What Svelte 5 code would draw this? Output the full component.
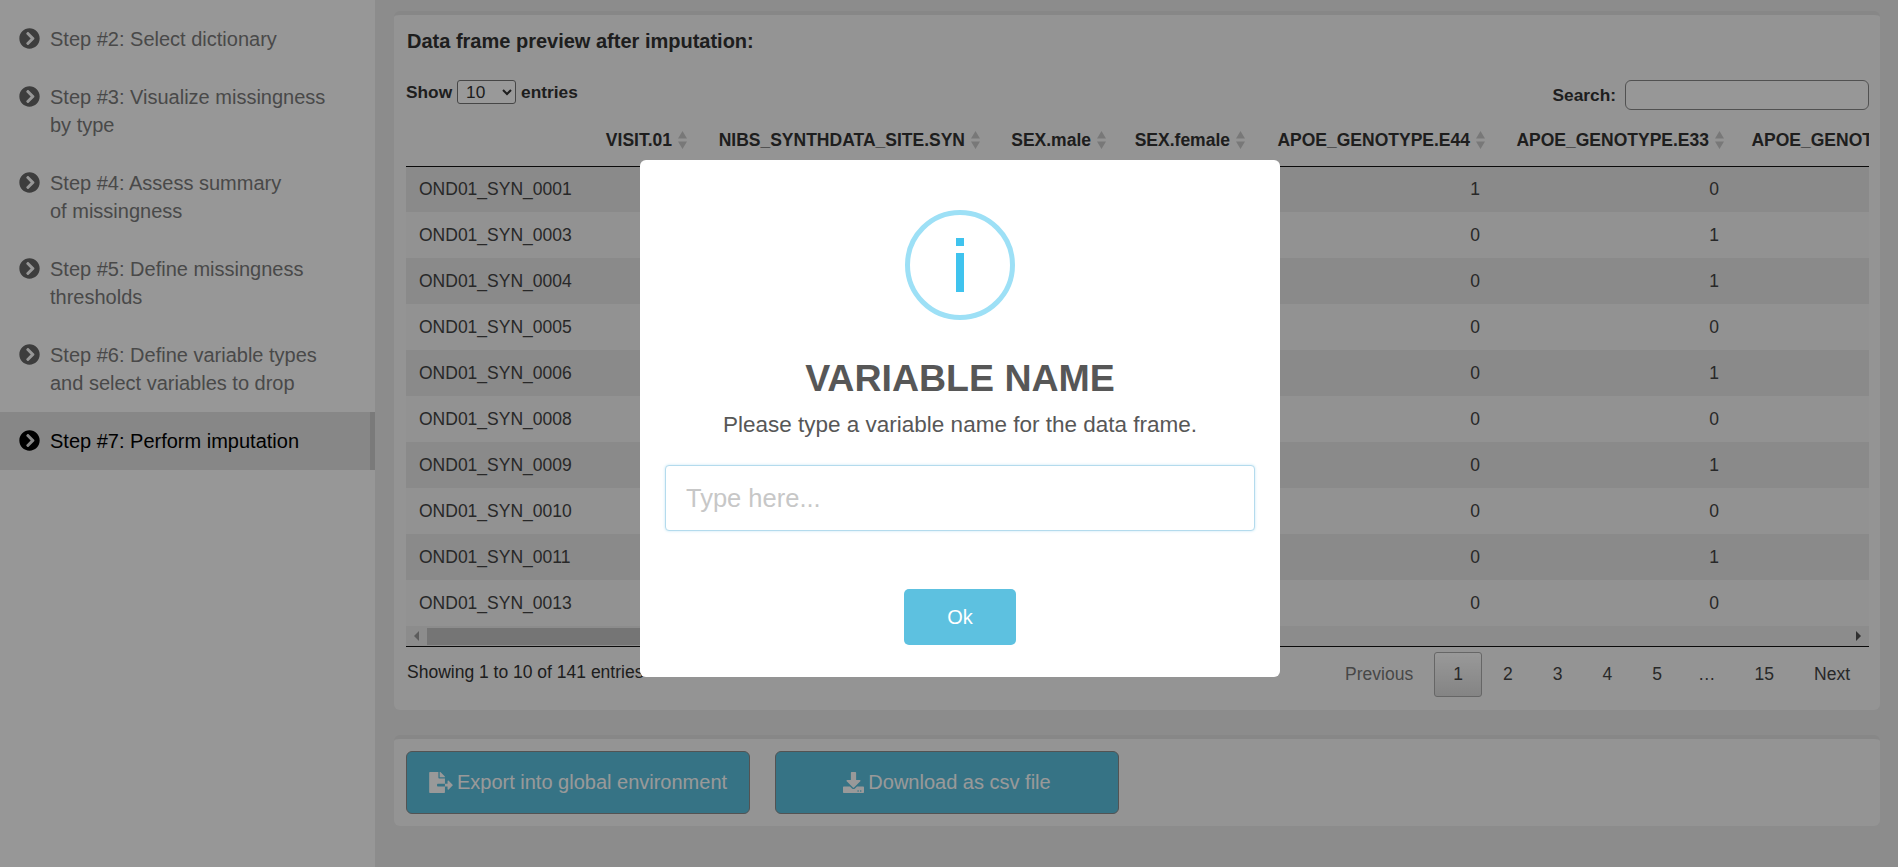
<script lang="ts">
	const steps = [
		'Step #2: Select dictionary',
		'Step #3: Visualize missingness\nby type',
		'Step #4: Assess summary\nof missingness',
		'Step #5: Define missingness\nthresholds',
		'Step #6: Define variable types\nand select variables to drop',
		'Step #7: Perform imputation'
	];

	const columns = [
		{ name: '', width: 180 },
		{ name: 'VISIT.01', width: 105 },
		{ name: 'NIBS_SYNTHDATA_SITE.SYN', width: 293 },
		{ name: 'SEX.male', width: 126 },
		{ name: 'SEX.female', width: 139 },
		{ name: 'APOE_GENOTYPE.E44', width: 240 },
		{ name: 'APOE_GENOTYPE.E33', width: 239 },
		{ name: 'APOE_GENOTYPE.E34', width: 235 }
	];

	const rows = [
		{ id: 'OND01_SYN_0001', e44: 1, e33: 0 },
		{ id: 'OND01_SYN_0003', e44: 0, e33: 1 },
		{ id: 'OND01_SYN_0004', e44: 0, e33: 1 },
		{ id: 'OND01_SYN_0005', e44: 0, e33: 0 },
		{ id: 'OND01_SYN_0006', e44: 0, e33: 1 },
		{ id: 'OND01_SYN_0008', e44: 0, e33: 0 },
		{ id: 'OND01_SYN_0009', e44: 0, e33: 1 },
		{ id: 'OND01_SYN_0010', e44: 0, e33: 0 },
		{ id: 'OND01_SYN_0011', e44: 0, e33: 1 },
		{ id: 'OND01_SYN_0013', e44: 0, e33: 0 }
	];

	const pages = ['2', '3', '4', '5', '…', '15'];
	const tableWidth = columns.reduce((sum, c) => sum + c.width, 0);
</script>

<div class="page">
	<aside class="sidebar">
		{#each steps as step, i}
			<div class="step" class:active={i === steps.length - 1}>
				<svg class="step-icon" viewBox="0 0 512 512" aria-hidden="true">
					<path
						fill="currentColor"
						d="M256 8c137 0 248 111 248 248S393 504 256 504 8 393 8 256 119 8 256 8zm113.9 231L234.4 103.5c-9.4-9.4-24.6-9.4-33.9 0l-17 17c-9.4 9.4-9.4 24.6 0 33.9L285.1 256 183.5 357.6c-9.4 9.4-9.4 24.6 0 33.9l17 17c9.4 9.4 24.6 9.4 33.9 0L369.9 273c9.4-9.4 9.4-24.6 0-34z"
					/>
				</svg>
				<span class="step-label">{step}</span>
			</div>
		{/each}
	</aside>

	<main class="content">
		<section class="box preview">
			<h2>Data frame preview after imputation:</h2>

			<div class="controls">
				<label class="length">
					Show
					<select>
						<option>10</option>
					</select>
					entries
				</label>
				<label class="search">
					Search:
					<input type="text" />
				</label>
			</div>

			<div class="table-wrap">
				<div class="table-clip">
					<table style="width: {tableWidth}px">
						<colgroup>
							{#each columns as col}
								<col style="width: {col.width}px" />
							{/each}
						</colgroup>
						<thead>
							<tr>
								{#each columns as col}
									<th>
										{#if col.name}
											<div class="th-inner">
												<span>{col.name}</span>
												<svg class="sort" viewBox="0 0 9 18" aria-hidden="true">
													<path d="M4.5 0 9 7.5H0z M4.5 18 0 10.5H9z" />
												</svg>
											</div>
										{/if}
									</th>
								{/each}
							</tr>
						</thead>
						<tbody>
							{#each rows as row}
								<tr>
									<td class="id">{row.id}</td>
									<td></td>
									<td></td>
									<td></td>
									<td></td>
									<td>{row.e44}</td>
									<td>{row.e33}</td>
									<td></td>
								</tr>
							{/each}
						</tbody>
					</table>
				</div>
				<div class="scrollbar">
					<span class="arrow left"></span>
					<span class="thumb"></span>
					<span class="arrow right"></span>
				</div>
			</div>

			<div class="table-footer">
				<div class="info">Showing 1 to 10 of 141 entries</div>
				<div class="pagination">
					<span class="page-link disabled">Previous</span>
					<span class="page-link current">1</span>
					{#each pages as p}
						<span class="page-link" class:ellipsis={p === '…'}>{p}</span>
					{/each}
					<span class="page-link">Next</span>
				</div>
			</div>
		</section>

		<section class="box actions">
			<button type="button" class="action-btn">
				<svg class="btn-icon export" viewBox="0 0 576 512" aria-hidden="true">
					<path
						fill="currentColor"
						d="M384 121.9c0-6.3-2.5-12.4-7-16.9L279.1 7c-4.5-4.5-10.6-7-17-7H256v128h128zM571 308l-95.7-96.4c-10.1-10.1-27.4-3-27.4 11.3V288h-64v64h64v65.2c0 14.3 17.3 21.4 27.4 11.3L571 332c6.6-6.6 6.6-17.4 0-24zm-379 28v-32c0-8.8 7.2-16 16-16h176V160H248c-13.2 0-24-10.8-24-24V0H24C10.7 0 0 10.7 0 24v464c0 13.3 10.7 24 24 24h336c13.3 0 24-10.7 24-24V352H208c-8.8 0-16-7.2-16-16z"
					/>
				</svg>
				Export into global environment
			</button>
			<button type="button" class="action-btn">
				<svg class="btn-icon" viewBox="0 0 512 512" aria-hidden="true">
					<path
						fill="currentColor"
						d="M216 0h80c13.3 0 24 10.7 24 24v168h87.7c17.8 0 26.7 21.5 14.1 34.1L269.7 378.3c-7.5 7.5-19.8 7.5-27.3 0L90.1 226.1c-12.6-12.6-3.7-34.1 14.1-34.1H192V24c0-13.3 10.7-24 24-24zm296 376v112c0 13.3-10.7 24-24 24H24c-13.3 0-24-10.7-24-24V376c0-13.3 10.7-24 24-24h146.7l49 49c20.1 20.1 52.5 20.1 72.6 0l49-49H488c13.3 0 24 10.7 24 24zm-124 88c0-11-9-20-20-20s-20 9-20 20 9 20 20 20 20-9 20-20zm64 0c0-11-9-20-20-20s-20 9-20 20 9 20 20 20 20-9 20-20z"
					/>
				</svg>
				Download as csv file
			</button>
		</section>
	</main>

	<div class="overlay">
		<div class="modal">
			<div class="info-icon">
				<span class="dot"></span>
				<span class="stem"></span>
			</div>
			<h1>VARIABLE NAME</h1>
			<p>Please type a variable name for the data frame.</p>
			<input class="name-input" type="text" placeholder="Type here..." />
			<button type="button" class="ok-btn">Ok</button>
		</div>
	</div>
</div>

<style>
	:global(body) {
		margin: 0;
		font-family: 'Liberation Sans', Arial, sans-serif;
		color: #333;
		background: #e9e9e9;
	}

	:global(*) {
		box-sizing: border-box;
	}

	.page {
		display: flex;
		height: 867px;
		overflow: hidden;
		background: #e9e9e9;
	}

	.sidebar {
		width: 375px;
		flex-shrink: 0;
		padding-top: 10px;
		background: #fcfcfc;
	}

	.step {
		display: flex;
		align-items: flex-start;
		gap: 10px;
		padding: 15px 5px 15px 19px;
		font-size: 20px;
		line-height: 28px;
		color: #7a7a7a;
	}

	.step.active {
		background: #e1e1e1;
		border-right: 5px solid #cccccc;
		color: #000;
	}

	.step-icon {
		width: 21px;
		height: 21px;
		margin-top: 3px;
		flex-shrink: 0;
		color: #666;
	}

	.step.active .step-icon {
		color: #000;
	}

	.step-label {
		white-space: pre-line;
	}

	.content {
		flex: 1;
		min-width: 0;
		padding: 11px 18px 0 19px;
	}

	.box {
		background: #f7f7f7;
		border-top: 4px solid #e1e1e1;
		border-radius: 6px;
		padding: 0 11px 0 12px;
	}

	.preview {
		height: 699px;
	}

	h2 {
		margin: 0;
		height: 52px;
		padding-left: 1px;
		line-height: 52px;
		font-size: 20px;
		font-weight: 700;
		color: #333;
	}

	.controls {
		display: flex;
		justify-content: space-between;
		align-items: flex-start;
		height: 30px;
		margin-top: 13px;
		font-size: 17.3px;
		font-weight: 700;
	}

	.length {
		display: flex;
		align-items: center;
		gap: 5px;
		height: 24px;
	}

	select {
		width: 59px;
		height: 24px;
		padding: 0 0 0 4px;
		border: 1px solid #767676;
		border-radius: 3px;
		background: #fff;
		font-family: inherit;
		font-size: 17.3px;
		color: #333;
	}

	.search {
		display: flex;
		align-items: center;
		gap: 9px;
		height: 30px;
	}

	.search input {
		width: 244px;
		height: 30px;
		border: 1px solid #888;
		border-radius: 6px;
		background: #fcfcfc;
	}

	.table-wrap {
		margin-top: 5px;
		width: 1463px;
		border-bottom: 1px solid #111;
	}

	.table-clip {
		overflow: hidden;
	}

	table {
		table-layout: fixed;
		border-collapse: collapse;
		font-size: 17.5px;
	}

	th {
		height: 51px;
		padding: 0 4px 0 10px;
		border-bottom: 1px solid #111;
		font-size: 17.5px;
		font-weight: 700;
		color: #333;
		white-space: nowrap;
	}

	.th-inner {
		display: flex;
		justify-content: flex-end;
		align-items: center;
		gap: 6px;
	}

	.sort {
		width: 9px;
		height: 18px;
		flex-shrink: 0;
		fill: #c8c8c8;
	}

	td {
		height: 46px;
		padding: 0 9px 0 13px;
		color: #444;
		text-align: right;
		overflow: hidden;
	}

	td.id {
		text-align: left;
	}

	tbody tr:nth-child(odd) {
		background: #e6e6e6;
	}

	tbody tr:nth-child(even) {
		background: #f3f3f3;
	}

	.scrollbar {
		display: flex;
		align-items: center;
		justify-content: space-between;
		position: relative;
		height: 20px;
		background: #e9e9e9;
	}

	.thumb {
		position: absolute;
		left: 21px;
		top: 2px;
		width: 500px;
		height: 17px;
		background: #c3c3c3;
	}

	.arrow {
		width: 0;
		height: 0;
		border-top: 5px solid transparent;
		border-bottom: 5px solid transparent;
	}

	.arrow.left {
		margin-left: 8px;
		border-right: 5px solid #9a9a9a;
	}

	.arrow.right {
		margin-right: 8px;
		border-left: 5px solid #505050;
	}

	.table-footer {
		display: flex;
		justify-content: space-between;
		margin-top: 5px;
		width: 1463px;
		font-size: 17.5px;
	}

	.info {
		padding: 10px 0 0 1px;
	}

	.pagination {
		display: flex;
		gap: 2px;
	}

	.page-link {
		display: flex;
		align-items: center;
		height: 45px;
		padding: 0 18px;
		border: 1px solid transparent;
		border-radius: 3px;
		color: #444;
	}

	.page-link.disabled {
		color: #777;
	}

	.page-link.current {
		border-color: #aaa;
		background: linear-gradient(to bottom, #fff, #dcdcdc);
	}

	.page-link.ellipsis {
		justify-content: center;
		width: 47.7px;
		padding: 0;
		margin-right: 3px;
	}

	.actions {
		height: 91px;
		margin-top: 25px;
		padding-top: 12px;
		display: flex;
		gap: 25px;
	}

	.action-btn {
		display: flex;
		align-items: center;
		justify-content: center;
		gap: 4px;
		width: 344px;
		height: 63px;
		border: 1px solid #8a8a8a;
		border-radius: 6px;
		background: #5bc0de;
		color: #fff;
		font-family: inherit;
		font-size: 20px;
	}

	.btn-icon {
		width: 21px;
		height: 21px;
	}

	.btn-icon.export {
		width: 24px;
	}

	.overlay {
		position: fixed;
		inset: 0;
		background: rgba(0, 0, 0, 0.4);
		padding: 160px 0 0 640px;
	}

	.modal {
		display: flex;
		flex-direction: column;
		align-items: center;
		width: 640px;
		padding: 50px 25px 32px;
		background: #fff;
		border-radius: 6px;
	}

	.info-icon {
		display: flex;
		flex-direction: column;
		align-items: center;
		justify-content: center;
		gap: 7px;
		width: 110px;
		height: 110px;
		border: 5px solid #9de0f6;
		border-radius: 50%;
	}

	.dot {
		width: 8px;
		height: 8px;
		background: #3fc3ee;
	}

	.stem {
		width: 8px;
		height: 39px;
		background: #3fc3ee;
	}

	h1 {
		margin: 36px 0 0;
		height: 44px;
		line-height: 44px;
		font-size: 37.5px;
		font-weight: 700;
		color: #575757;
	}

	p {
		margin: 10px 0 0;
		height: 30px;
		line-height: 30px;
		font-size: 22.5px;
		color: #575757;
	}

	.name-input {
		width: 590px;
		height: 66px;
		margin-top: 25px;
		padding: 0 20px;
		border: 1px solid #b4dbed;
		border-radius: 4px;
		box-shadow: 0 0 3px #c5e6f5;
		font-family: inherit;
		font-size: 25.5px;
		color: #333;
		outline: none;
	}

	.name-input::placeholder {
		color: #c7c7c7;
	}

	.ok-btn {
		width: 112px;
		height: 56px;
		margin-top: 58px;
		border: none;
		border-radius: 5px;
		background: #5dc1e0;
		color: #fff;
		font-family: inherit;
		font-size: 20px;
	}
</style>
